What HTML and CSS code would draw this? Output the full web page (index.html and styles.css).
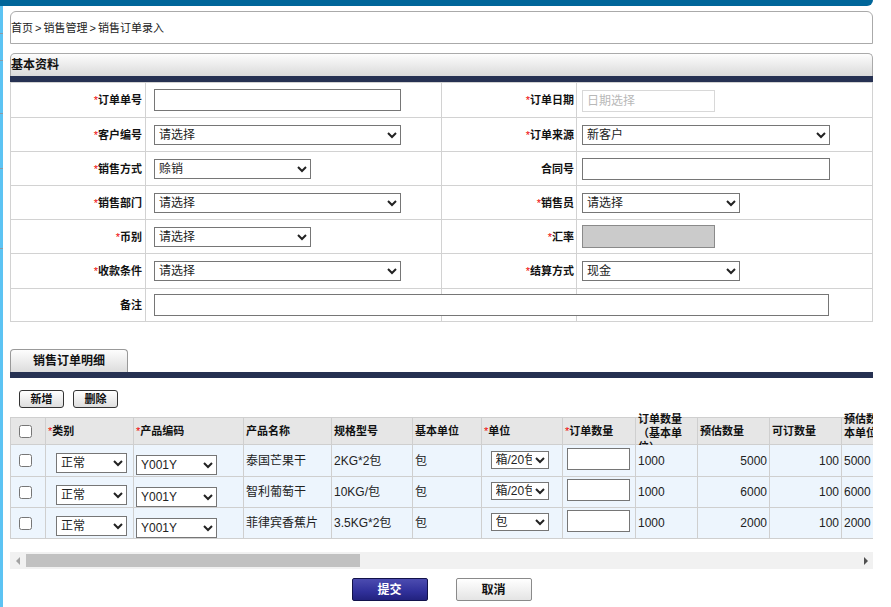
FILE: index.html
```html
<!DOCTYPE html>
<html lang="zh-CN">
<head>
<meta charset="utf-8">
<title>销售订单录入</title>
<link rel="stylesheet" href="styles.css">
</head>
<body>
<div class="topbar"></div>
<div class="page">
  <div class="strip"><i class="l1"></i><i class="l2"></i><i class="l3"></i><i class="l4"></i><i class="l5"></i></div>
  <div class="main">
    <div class="crumb">首页 &gt; 销售管理 &gt; 销售订单录入</div>

    <div class="panel-head">基本资料</div>
    <div class="navy"></div>
    <table class="form">
      <colgroup><col class="c-lab"><col class="c-val"><col class="c-lab"><col class="c-val"></colgroup>
      <tr class="r1">
        <td class="lab"><span class="req">*</span>订单单号</td>
        <td class="val"><input type="text" class="inp w-long"></td>
        <td class="lab lab-r"><span class="req">*</span>订单日期</td>
        <td class="val val-r"><input type="text" class="inp date" placeholder="日期选择"></td>
      </tr>
      <tr>
        <td class="lab"><span class="req">*</span>客户编号</td>
        <td class="val"><select class="sel w-long"><option>请选择</option></select></td>
        <td class="lab lab-r"><span class="req">*</span>订单来源</td>
        <td class="val val-r"><select class="sel w-long2"><option>新客户</option></select></td>
      </tr>
      <tr>
        <td class="lab"><span class="req">*</span>销售方式</td>
        <td class="val"><select class="sel w-short"><option>赊销</option></select></td>
        <td class="lab lab-r">合同号</td>
        <td class="val val-r"><input type="text" class="inp w-long2"></td>
      </tr>
      <tr>
        <td class="lab"><span class="req">*</span>销售部门</td>
        <td class="val"><select class="sel w-long"><option>请选择</option></select></td>
        <td class="lab lab-r"><span class="req">*</span>销售员</td>
        <td class="val val-r"><select class="sel w-short2"><option>请选择</option></select></td>
      </tr>
      <tr>
        <td class="lab"><span class="req">*</span>币别</td>
        <td class="val"><select class="sel w-short"><option>请选择</option></select></td>
        <td class="lab lab-r"><span class="req">*</span>汇率</td>
        <td class="val val-r"><input type="text" class="inp rate" disabled></td>
      </tr>
      <tr class="r6">
        <td class="lab"><span class="req">*</span>收款条件</td>
        <td class="val"><select class="sel w-long"><option>请选择</option></select></td>
        <td class="lab lab-r"><span class="req">*</span>结算方式</td>
        <td class="val val-r"><select class="sel w-short2"><option>现金</option></select></td>
      </tr>
      <tr class="r7">
        <td class="lab">备注</td>
        <td class="val memo-cell"><input type="text" class="inp memo"></td>
        <td class="lab lab-r"></td>
        <td class="val val-r"></td>
      </tr>
    </table>

    <div class="tabs"><div class="tab">销售订单明细</div></div>
    <div class="navy"></div>

    <div class="toolbar">
      <button type="button" class="btn-s">新增</button>
      <button type="button" class="btn-s">删除</button>
    </div>

    <div class="grid-wrap">
      <table class="grid">
        <colgroup>
          <col class="g1"><col class="g2"><col class="g3"><col class="g4"><col class="g5"><col class="g6">
          <col class="g7"><col class="g8"><col class="g9"><col class="g10"><col class="g11"><col class="g12">
          <col class="g13"><col class="g13"><col class="g13"><col class="g13"><col class="g13"><col class="g13">
        </colgroup>
        <thead>
          <tr>
            <th class="chk"><div class="th-in"><input type="checkbox"></div></th>
            <th><div class="th-in"><span><span class="req">*</span>类别</span></div></th>
            <th><div class="th-in"><span><span class="req">*</span>产品编码</span></div></th>
            <th><div class="th-in"><span>产品名称</span></div></th>
            <th><div class="th-in"><span>规格型号</span></div></th>
            <th><div class="th-in"><span>基本单位</span></div></th>
            <th><div class="th-in"><span><span class="req">*</span>单位</span></div></th>
            <th><div class="th-in"><span><span class="req">*</span>订单数量</span></div></th>
            <th><div class="th-in multi"><span>订单数量（基本单位）</span></div></th>
            <th><div class="th-in"><span>预估数量</span></div></th>
            <th><div class="th-in"><span>可订数量</span></div></th>
            <th><div class="th-in multi"><span>预估数量（基本单位）</span></div></th>
            <th><div class="th-in"><span>单价</span></div></th>
            <th><div class="th-in"><span>金额</span></div></th>
            <th><div class="th-in"><span>税率</span></div></th>
            <th><div class="th-in"><span>税额</span></div></th>
            <th><div class="th-in"><span>价税合计</span></div></th>
            <th><div class="th-in"><span>备注</span></div></th>
          </tr>
        </thead>
        <tbody>
          <tr class="row1">
            <td class="chk"><input type="checkbox"></td>
            <td class="ctr"><select class="gs g-type"><option>正常</option></select></td>
            <td><select class="gs g-code"><option>Y001Y</option></select></td>
            <td>泰国芒果干</td>
            <td>2KG*2包</td>
            <td>包</td>
            <td class="ctr"><select class="gs g-unit"><option>箱/20包</option></select></td>
            <td class="ctr"><input type="text" class="g-qty"></td>
            <td>1000</td>
            <td class="num">5000</td>
            <td class="num">100</td>
            <td>5000</td>
            <td></td><td></td><td></td><td></td><td></td><td></td>
          </tr>
          <tr>
            <td class="chk"><input type="checkbox"></td>
            <td class="ctr"><select class="gs g-type"><option>正常</option></select></td>
            <td><select class="gs g-code"><option>Y001Y</option></select></td>
            <td>智利葡萄干</td>
            <td>10KG/包</td>
            <td>包</td>
            <td class="ctr"><select class="gs g-unit"><option>箱/20包</option></select></td>
            <td class="ctr"><input type="text" class="g-qty"></td>
            <td>1000</td>
            <td class="num">6000</td>
            <td class="num">100</td>
            <td>6000</td>
            <td></td><td></td><td></td><td></td><td></td><td></td>
          </tr>
          <tr>
            <td class="chk"><input type="checkbox"></td>
            <td class="ctr"><select class="gs g-type"><option>正常</option></select></td>
            <td><select class="gs g-code"><option>Y001Y</option></select></td>
            <td>菲律宾香蕉片</td>
            <td>3.5KG*2包</td>
            <td>包</td>
            <td class="ctr"><select class="gs g-unit"><option>包</option></select></td>
            <td class="ctr"><input type="text" class="g-qty"></td>
            <td>1000</td>
            <td class="num">2000</td>
            <td class="num">100</td>
            <td>2000</td>
            <td></td><td></td><td></td><td></td><td></td><td></td>
          </tr>
        </tbody>
      </table>
    </div>

    <div class="hscroll">
      <div class="sb-btn sb-left"><span class="tri-l"></span></div>
      <div class="sb-track"><div class="sb-thumb"></div></div>
      <div class="sb-btn sb-right"><span class="tri-r"></span></div>
    </div>

    <div class="actions">
      <button type="button" class="btn-primary">提交</button>
      <button type="button" class="btn-cancel">取消</button>
    </div>
  </div>
</div>
</body>
</html>
```

FILE: styles.css
```css
* { box-sizing: border-box; }
html, body { margin: 0; padding: 0; background: #fff; }
body {
  width: 891px;
  height: 607px;
  overflow: hidden;
  font-family: "Liberation Sans", "Noto Sans CJK SC", sans-serif;
  font-size: 12px;
  color: #222;
}
.topbar {
  width: 873px;
  height: 6px;
  background: #00669a;
  border-bottom-right-radius: 6px;
}
.page { display: flex; }
.strip {
  width: 3px;
  height: 601px;
  background: #5cc3f3;
  display: flex;
  flex-direction: column;
}
.strip i { display: block; border-bottom: 1px solid #8c9aa6; }
.strip .l1 { height: 28px; }
.strip .l2 { height: 27px; }
.strip .l3 { height: 53px; }
.strip .l4 { height: 55px; }
.strip .l5 { height: 80px; }

.main { width: 863px; margin-left: 7px; padding-top: 5px; }

.crumb {
  height: 33px;
  border: 1px solid #aaa;
  border-radius: 6px 6px 0 0;
  display: flex;
  align-items: center;
  line-height: 16px;
  font-size: 11px;
  word-spacing: -1px;
  color: #222;
}

.panel-head {
  margin-top: 9px;
  height: 23px;
  border: 1px solid #aaa;
  border-bottom: 0;
  border-radius: 5px 5px 0 0;
  background: linear-gradient(#fdfdfd, #dadada);
  display: flex;
  align-items: center;
  font-weight: bold;
  color: #111;
  line-height: 16px;
}
.navy { height: 6px; background: #263152; }

/* form table */
.form {
  width: 863px;
  border-collapse: collapse;
  table-layout: fixed;
}
.form .c-lab { width: 135px; }
.form .c-val { width: 296px; }
.form td {
  border: 1px solid #d2d2d2;
  height: 34px;
  padding: 0;
  vertical-align: middle;
}
.form .r1 td { height: 35px; }
.form .r6 td { height: 35px; }
.form .r7 td { height: 33px; }
.form .lab {
  text-align: right;
  padding-right: 3px;
  font-weight: bold;
  font-size: 11px;
  color: #111;
  line-height: 14px;
}
.form .lab-r { padding-right: 2px; }
.req { color: #e00; font-weight: normal; font-family: "Liberation Sans", sans-serif; }
.form .val { padding-left: 8px; }
.form .val-r { padding-left: 5px; }
.memo-cell { overflow: visible; white-space: nowrap; }

.inp {
  display: block;
  height: 22px;
  border: 1px solid #767676;
  border-radius: 0;
  padding: 0 4px;
  font: inherit;
  background: #fff;
}
.inp.date {
  width: 133px;
  border-color: #d8d8d8;
  margin-top: 2px;
}
.inp.date::placeholder { color: #b8b8b8; }
.inp.rate {
  width: 133px;
  height: 23px;
  background: #cbcbcb;
  border-color: #8a8a8a;
}
.inp.memo { width: 675px; position: relative; }
.w-long { width: 247px; }
.w-long2 { width: 248px; }
.w-short { width: 157px; }
.w-short2 { width: 158px; }

.sel {
  display: block;
  height: 20px;
  border: 1px solid #767676;
  border-radius: 0;
  background: #fff;
  font: inherit;
  font-size: 12px;
  color: #222;
  padding: 0;
}

/* tabs */
.tabs { margin-top: 27px; display: flex; }
.tab {
  width: 118px;
  height: 23px;
  border: 1px solid #999;
  border-bottom: 0;
  border-radius: 4px 4px 0 0;
  background: linear-gradient(#fdfdfd, #dcdcdc);
  display: flex;
  align-items: center;
  justify-content: center;
  font-weight: bold;
  color: #111;
  line-height: 16px;
}

.toolbar { margin-top: 12px; display: flex; gap: 9px; padding-left: 9px; }
.btn-s {
  width: 45px;
  height: 18px;
  border: 1px solid #333;
  border-radius: 3px;
  background: linear-gradient(#ffffff, #dedede);
  font: inherit;
  font-size: 11px;
  font-weight: bold;
  color: #111;
  padding: 0;
  line-height: 14px;
}

/* grid */
.grid-wrap {
  width: 863px;
  overflow: hidden;
  padding-top: 9px;
  padding-bottom: 13px;
}
.grid {
  width: 2136px;
  border-collapse: collapse;
  table-layout: fixed;
}
.grid .g1 { width: 35px; }
.grid .g2 { width: 88px; }
.grid .g3 { width: 110px; }
.grid .g4 { width: 88px; }
.grid .g5 { width: 81px; }
.grid .g6 { width: 69px; }
.grid .g7 { width: 81px; }
.grid .g8 { width: 73px; }
.grid .g9 { width: 62px; }
.grid .g10 { width: 72px; }
.grid .g11 { width: 72px; }
.grid .g12 { width: 76px; }
.grid .g13 { width: 229px; }
.grid th {
  background: #e6e6e6;
  border: 1px solid #cfcfcf;
  height: 27px;
  padding: 0 2px;
  text-align: left;
  font-weight: bold;
  font-size: 11px;
  color: #111;
  vertical-align: middle;
}
.th-in {
  height: 26px;
  display: flex;
  align-items: center;
  line-height: 14px;
}
.th-in.multi { align-items: flex-start; }
.th-in.multi span { margin-top: -6px; }
.grid th.chk { padding-left: 4px; }
.grid td {
  position: relative;
  background: #edf5fd;
  border: 1px solid #cfcfcf;
  height: 31px;
  padding: 0 2px;
  vertical-align: middle;
  white-space: nowrap;
  overflow: hidden;
  line-height: 16px;
}
.grid .row1 td { height: 32px; }
.grid td.chk { padding-left: 4px; }
.grid td.ctr { text-align: center; }
.grid td.num { text-align: right; }
.grid input[type="checkbox"] { margin: 3px 3px 3px 4px; vertical-align: middle; }
.gs {
  height: 20px;
  border: 1px solid #767676;
  border-radius: 0;
  background: #fff;
  font: inherit;
  font-size: 12px;
  color: #222;
  padding: 0;
  vertical-align: middle;
}
.g-type { width: 71px; margin-top: 5px; margin-left: 4px; }
.g-code { width: 81px; margin-top: 9px; }
.g-unit { width: 58px; height: 18px; margin-top: -2px; margin-right: 5px; }
.g-qty {
  width: 63px;
  height: 22px;
  border: 1px solid #767676;
  border-radius: 0;
  vertical-align: middle;
  margin-top: -4px;
  margin-right: 2px;
  font: inherit;
}

/* fake horizontal scrollbar */
.hscroll {
  display: flex;
  width: 863px;
  height: 17px;
  background: #f1f1f1;
}
.sb-btn {
  width: 15px;
  height: 17px;
  display: flex;
  align-items: center;
  justify-content: center;
}
.tri-l {
  width: 0; height: 0;
  border-top: 4px solid transparent;
  border-bottom: 4px solid transparent;
  border-right: 4px solid #a3a3a3;
}
.tri-r {
  width: 0; height: 0;
  border-top: 4px solid transparent;
  border-bottom: 4px solid transparent;
  border-left: 4px solid #505050;
}
.sb-track { flex: 1; padding: 2px 0 2px 1px; }
.sb-thumb { width: 334px; height: 13px; background: #c1c1c1; }

.actions {
  display: flex;
  justify-content: center;
  gap: 28px;
  margin-top: 9px;
}
.actions button {
  width: 76px;
  height: 23px;
  border-radius: 2px;
  font: inherit;
  font-weight: bold;
  padding: 0;
  line-height: 16px;
}
.btn-primary {
  border: 1px solid #12124a;
  background: linear-gradient(#4c4cb0, #30309a 60%, #22227e);
  color: #fff;
}
.btn-cancel {
  border: 1px solid #8a8a8a;
  background: linear-gradient(#ffffff, #e4e4e4);
  color: #111;
}
```
